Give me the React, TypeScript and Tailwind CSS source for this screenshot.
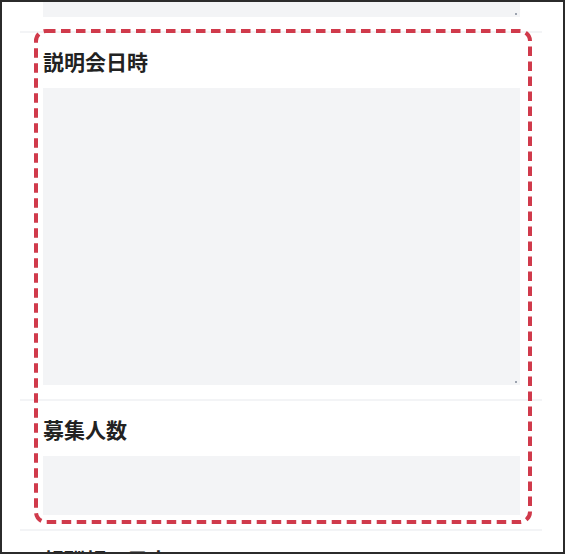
const font = { fontFamily: '"Noto Sans CJK JP", "Noto Sans", sans-serif' };

function Field({ height }: { height: string }) {
  return (
    <div className={`relative w-full bg-[#f3f4f6] ${height}`}>
      <span className="absolute right-[3px] bottom-[2px] h-[2px] w-[2px] bg-[#9ca3af]" />
    </div>
  );
}

function Section({ title, children }: { title: string; children?: React.ReactNode }) {
  return (
    <section className="border-t-2 border-[#f3f4f6] pt-[14px] pb-[14px] pl-[23px] pr-[22px]">
      <h2 className="mb-[13px] text-[21px] leading-[28px] font-bold text-[#222]">{title}</h2>
      {children}
    </section>
  );
}

export default function App() {
  return (
    <div
      className="relative h-[554px] w-[565px] overflow-hidden border-2 border-[#2b2b2b] bg-white"
      style={font}
    >
      <div className="ml-[18px] w-[522px]">
        {/* previous field, scrolled mostly out of view */}
        <div className="pb-[14px] pl-[23px] pr-[22px]">
          <Field height="h-[15px]" />
        </div>

        <Section title="説明会日時">
          <Field height="h-[297px]" />
        </Section>

        <Section title="募集人数">
          <div className="h-[59px] w-full bg-[#f3f4f6]" />
        </Section>

        <Section title="報酬額の目安" />
      </div>

      {/* highlight annotation */}
      <svg
        className="pointer-events-none absolute left-[32px] top-[27px]"
        width="498"
        height="495"
        viewBox="0 0 498 495"
      >
        <rect
          x="2"
          y="2"
          width="494"
          height="491"
          rx="10"
          fill="none"
          stroke="#d03a4b"
          strokeWidth="4"
          strokeDasharray="9.5 5.5"
        />
      </svg>
    </div>
  );
}
